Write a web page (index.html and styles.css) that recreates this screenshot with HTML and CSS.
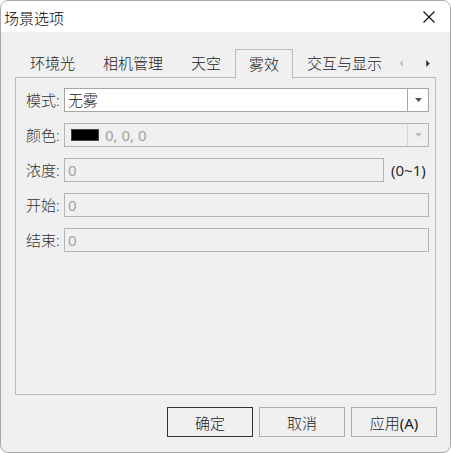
FILE: index.html
```html
<!DOCTYPE html>
<html lang="zh-CN">
<head>
  <meta charset="UTF-8">
  <title>场景选项</title>
  <link rel="stylesheet" href="styles.css">
</head>
<body>

  <div class="window">
    <div class="titlebar">
      <span class="title">场景选项</span>
      <svg class="close" viewBox="0 0 12 12">
        <path d="M0.5 0.5 L11.5 11.5 M11.5 0.5 L0.5 11.5"></path>
      </svg>
    </div>

    <div class="content">
      <div class="tabs">
        <div class="tab">环境光</div>
        <div class="tab">相机管理</div>
        <div class="tab">天空</div>
        <div class="tab active">雾效</div>
        <div class="tab">交互与显示</div>
        <div class="tab-scroll">
          <svg class="arrow disabled" viewBox="0 0 4 8"><polygon points="4,0 0,4 4,8"></polygon></svg>
          <svg class="arrow" viewBox="0 0 4 8"><polygon points="0,0 4,4 0,8"></polygon></svg>
        </div>
      </div>

      <div class="panel">
        <div class="row">
          <span class="label">模式:</span>
          <div class="field combo">
            <span class="value">无雾</span>
            <span class="drop"><svg viewBox="0 0 7 4"><polygon points="0,0 7,0 3.5,4"></polygon></svg></span>
          </div>
        </div>

        <div class="row">
          <span class="label">颜色:</span>
          <div class="field combo disabled">
            <span class="swatch"></span>
            <span class="value num">0, 0, 0</span>
            <span class="drop"><svg viewBox="0 0 7 4"><polygon points="0,0 7,0 3.5,4"></polygon></svg></span>
          </div>
        </div>

        <div class="row">
          <span class="label">浓度:</span>
          <div class="field disabled short"><span class="value num">0</span></div>
          <span class="hint num">(0~1)</span>
        </div>

        <div class="row">
          <span class="label">开始:</span>
          <div class="field disabled"><span class="value num">0</span></div>
        </div>

        <div class="row">
          <span class="label">结束:</span>
          <div class="field disabled"><span class="value num">0</span></div>
        </div>
      </div>

      <div class="buttons">
        <button class="btn default">确定</button>
        <button class="btn">取消</button>
        <button class="btn">应用<span class="num">(A)</span></button>
      </div>
    </div>
  </div>

</body>
</html>
```

FILE: styles.css
```css
* {
  box-sizing: border-box;
}

body {
  margin: 0;
  background: #fff;
  font-family: "Noto Sans", "Noto Sans CJK SC", sans-serif;
  font-size: 15px;
  font-weight: 300;
  color: #222;
}

.num {
  font-weight: 400;
}

.window {
  width: 451px;
  height: 453px;
  border: 1px solid #a8a8a8;
  border-radius: 8px;
  overflow: hidden;
  background: #f0f0f0;
  display: flex;
  flex-direction: column;
}

.titlebar {
  height: 31px;
  background: #fff;
  display: flex;
  justify-content: space-between;
  align-items: center;
  padding: 2px 15px 0 3px;
}

.title {
  color: #000;
  line-height: 20px;
}

.close {
  width: 12px;
  height: 12px;
  margin-top: -2px;
}

.close path {
  stroke: #111;
  stroke-width: 1.2;
  fill: none;
}

.content {
  flex: 1;
  padding-top: 17px;
  display: flex;
  flex-direction: column;
}

.tabs {
  height: 28px;
  margin: 0 13px 0 15px;
  display: flex;
  position: relative;
}

.tab {
  padding: 0 14px;
  display: flex;
  align-items: center;
  line-height: 20px;
  color: #222;
  white-space: nowrap;
}

.tab.active {
  border: 1px solid #bcbcbc;
  border-bottom: none;
  background: #f0f0f0;
  margin-bottom: -1px;
  padding: 0 13px;
  position: relative;
  z-index: 1;
}

.tab-scroll {
  position: absolute;
  right: 0;
  top: 0;
  height: 28px;
  width: 41px;
  background: #f0f0f0;
  display: flex;
  align-items: center;
  justify-content: space-between;
  padding: 0 7px 0 3px;
}

.arrow {
  width: 4px;
  height: 7px;
  fill: #333;
}

.arrow.disabled {
  fill: #c4c4c4;
}

.panel {
  height: 318px;
  margin: 0 14px 0 14px;
  border: 1px solid #bcbcbc;
  padding: 10px 6px 0 10px;
}

.row {
  display: flex;
  align-items: center;
  height: 24px;
  margin-bottom: 11px;
}

.label {
  width: 38px;
  color: #333;
  line-height: 20px;
}

.field {
  flex: 1;
  height: 24px;
  border: 1px solid #a6a6a6;
  background: #fff;
  display: flex;
  align-items: center;
  padding-left: 3px;
}

.field.disabled {
  background: #f0f0f0;
  border-color: #b4b4b4;
}

.field.short {
  flex: none;
  width: 320px;
}

.value {
  flex: 1;
  line-height: 20px;
  color: #111;
}

.field.disabled .value {
  color: #a2a2a6;
}

.drop {
  width: 21px;
  height: 22px;
  border-left: 1px solid #a6a6a6;
  display: flex;
  justify-content: center;
  align-items: center;
}

.drop svg {
  width: 7px;
  height: 4px;
  fill: #555;
}

.combo.disabled .drop {
  border-left-color: #d6d6d6;
}

.combo.disabled .drop svg {
  fill: #bdbdbd;
}

.swatch {
  width: 28px;
  height: 12px;
  background: #000;
  border: 1px solid #444;
  margin: 0 6px 0 3px;
}

.hint {
  margin-left: 7px;
  color: #2b2b3a;
  line-height: 20px;
}

.buttons {
  margin-top: 12px;
  padding-right: 13px;
  display: flex;
  justify-content: flex-end;
  gap: 6px;
}

.btn {
  width: 86px;
  height: 30px;
  border: 1px solid #adadad;
  background: #f0f0f0;
  font-family: "Noto Sans", "Noto Sans CJK SC", sans-serif;
  font-size: 15px;
  font-weight: 300;
  color: #222;
  padding: 0;
}

.btn.default {
  border-color: #333;
}
```
